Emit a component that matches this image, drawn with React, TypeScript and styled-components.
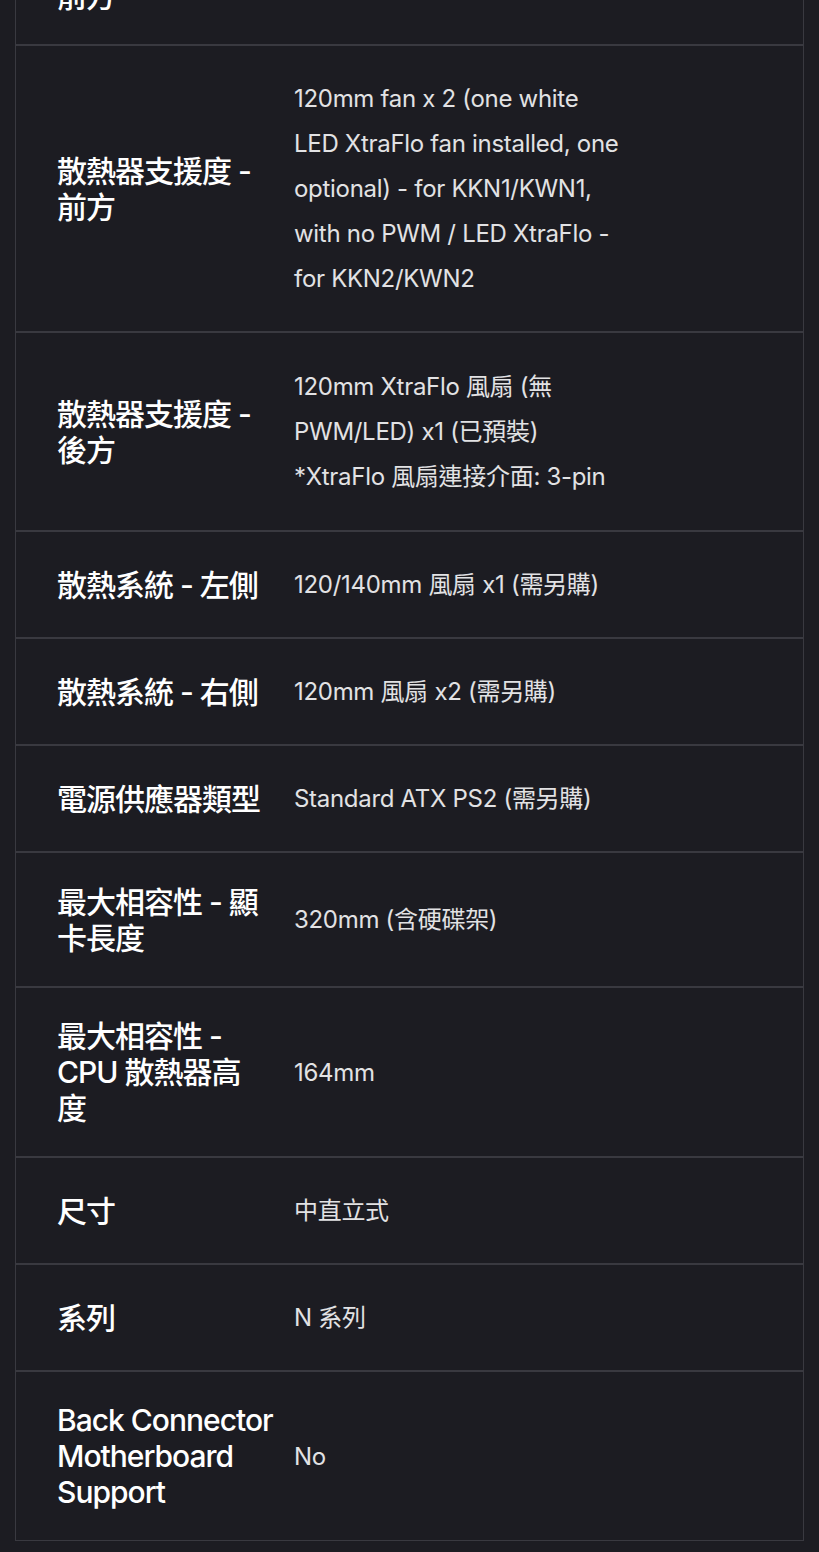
import React from "react";
import styled, { createGlobalStyle } from "styled-components";

const Global = createGlobalStyle`
  html, body {
    margin: 0;
    padding: 0;
    background: #1c1c22;
  }
  body {
    font-family: Inter, "Noto Sans CJK TC", "Noto Sans", sans-serif;
    -webkit-font-smoothing: antialiased;
  }
`;

const Page = styled.div`
  padding: 0 15px 12px;
  margin-top: -89px;
`;

const Table = styled.div`
  border: 1px solid #393940;
  display: flex;
  flex-direction: column;
`;

const Row = styled.div<{ $extra?: number }>`
  display: grid;
  grid-template-columns: 216px 330px;
  column-gap: 21px;
  align-items: center;
  padding: ${(p) => 30 + (p.$extra ?? 0) / 2}px 41px;
  & + & {
    border-top: 2px solid #393940;
  }
`;

const Label = styled.div`
  color: #ffffff;
  font-size: 30px;
  letter-spacing: -1px;
  line-height: 36px;
  font-weight: 500;
`;

const Line = styled.span`
  display: block;
  white-space: nowrap;
`;

const Value = styled.div`
  color: #e2e2e4;
  font-size: 24px;
  letter-spacing: -0.3px;
  line-height: 45px;
  font-weight: 400;
`;

type Spec = { label: React.ReactNode; value: React.ReactNode; extra?: number };

const lines = (...ls: string[]) => ls.map((l, i) => <Line key={i}>{l}</Line>);

const specs: Spec[] = [
  { label: "水冷排支援度 - 前方", value: "240mm" },
  {
    label: "散熱器支援度 - 前方",
    value:
      "120mm fan x 2 (one white LED XtraFlo fan installed, one optional) - for KKN1/KWN1, with no PWM / LED XtraFlo - for KKN2/KWN2",
  },
  {
    label: "散熱器支援度 - 後方",
    value: (
      <>
        120mm XtraFlo 風扇 (無 PWM/LED) x1 (已預裝)
        <br />
        *XtraFlo 風扇連接介面: 3-pin
      </>
    ),
    extra: 2,
  },
  { label: "散熱系統 - 左側", value: "120/140mm 風扇 x1 (需另購)" },
  { label: "散熱系統 - 右側", value: "120mm 風扇 x2 (需另購)" },
  { label: "電源供應器類型", value: "Standard ATX PS2 (需另購)" },
  { label: "最大相容性 - 顯卡長度", value: "320mm (含硬碟架)", extra: 1 },
  { label: lines("最大相容性 -", "CPU 散熱器高", "度"), value: "164mm" },
  { label: "尺寸", value: "中直立式" },
  { label: "系列", value: "N 系列" },
  { label: lines("Back Connector", "Motherboard", "Support"), value: "No" },
];

export default function App() {
  return (
    <>
      <Global />
      <Page>
        <Table>
          {specs.map((s, i) => (
            <Row key={i} $extra={s.extra}>
              <Label>{s.label}</Label>
              <Value>{s.value}</Value>
            </Row>
          ))}
        </Table>
      </Page>
    </>
  );
}
